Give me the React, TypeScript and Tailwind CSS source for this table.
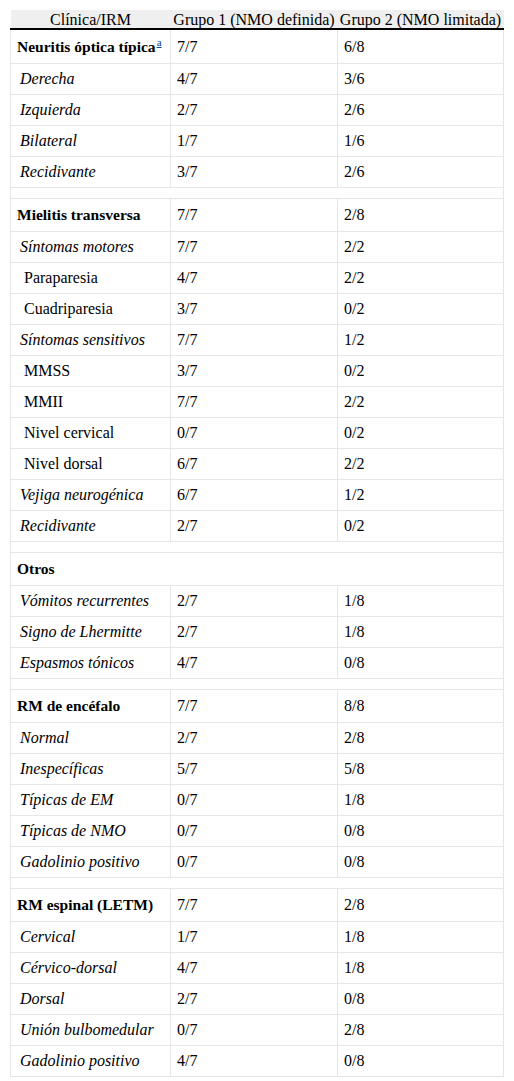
type Row =
  | { kind: 'main'; label: string; g1: string; g2: string; note?: boolean }
  | { kind: 'sub'; label: string; g1: string; g2: string }
  | { kind: 'subsub'; label: string; g1: string; g2: string }
  | { kind: 'span'; label: string }
  | { kind: 'gap' }

const rows: Row[] = [
  { kind: 'main', label: 'Neuritis óptica típica', g1: '7/7', g2: '6/8', note: true },
  { kind: 'sub', label: 'Derecha', g1: '4/7', g2: '3/6' },
  { kind: 'sub', label: 'Izquierda', g1: '2/7', g2: '2/6' },
  { kind: 'sub', label: 'Bilateral', g1: '1/7', g2: '1/6' },
  { kind: 'sub', label: 'Recidivante', g1: '3/7', g2: '2/6' },
  { kind: 'gap' },
  { kind: 'main', label: 'Mielitis transversa', g1: '7/7', g2: '2/8' },
  { kind: 'sub', label: 'Síntomas motores', g1: '7/7', g2: '2/2' },
  { kind: 'subsub', label: 'Paraparesia', g1: '4/7', g2: '2/2' },
  { kind: 'subsub', label: 'Cuadriparesia', g1: '3/7', g2: '0/2' },
  { kind: 'sub', label: 'Síntomas sensitivos', g1: '7/7', g2: '1/2' },
  { kind: 'subsub', label: 'MMSS', g1: '3/7', g2: '0/2' },
  { kind: 'subsub', label: 'MMII', g1: '7/7', g2: '2/2' },
  { kind: 'subsub', label: 'Nivel cervical', g1: '0/7', g2: '0/2' },
  { kind: 'subsub', label: 'Nivel dorsal', g1: '6/7', g2: '2/2' },
  { kind: 'sub', label: 'Vejiga neurogénica', g1: '6/7', g2: '1/2' },
  { kind: 'sub', label: 'Recidivante', g1: '2/7', g2: '0/2' },
  { kind: 'gap' },
  { kind: 'span', label: 'Otros' },
  { kind: 'sub', label: 'Vómitos recurrentes', g1: '2/7', g2: '1/8' },
  { kind: 'sub', label: 'Signo de Lhermitte', g1: '2/7', g2: '1/8' },
  { kind: 'sub', label: 'Espasmos tónicos', g1: '4/7', g2: '0/8' },
  { kind: 'gap' },
  { kind: 'main', label: 'RM de encéfalo', g1: '7/7', g2: '8/8' },
  { kind: 'sub', label: 'Normal', g1: '2/7', g2: '2/8' },
  { kind: 'sub', label: 'Inespecíficas', g1: '5/7', g2: '5/8' },
  { kind: 'sub', label: 'Típicas de EM', g1: '0/7', g2: '1/8' },
  { kind: 'sub', label: 'Típicas de NMO', g1: '0/7', g2: '0/8' },
  { kind: 'sub', label: 'Gadolinio positivo', g1: '0/7', g2: '0/8' },
  { kind: 'gap' },
  { kind: 'main', label: 'RM espinal (LETM)', g1: '7/7', g2: '2/8' },
  { kind: 'sub', label: 'Cervical', g1: '1/7', g2: '1/8' },
  { kind: 'sub', label: 'Cérvico-dorsal', g1: '4/7', g2: '1/8' },
  { kind: 'sub', label: 'Dorsal', g1: '2/7', g2: '0/8' },
  { kind: 'sub', label: 'Unión bulbomedular', g1: '0/7', g2: '2/8' },
  { kind: 'sub', label: 'Gadolinio positivo', g1: '4/7', g2: '0/8' },
]

const cell = 'border border-[#e6e6e6] px-[6px] py-0 align-middle'

function TableRow({ row }: { row: Row }) {
  if (row.kind === 'gap') {
    return (
      <tr className="h-[11px]">
        <td colSpan={3} className="border border-[#e6e6e6] p-0" />
      </tr>
    )
  }

  if (row.kind === 'span') {
    return (
      <tr className="h-[33px]">
        <td colSpan={3} className={`${cell} text-[15.5px] font-bold`}>
          {row.label}
        </td>
      </tr>
    )
  }

  let labelClass = ''
  let height = 'h-[31px]'
  if (row.kind === 'main') {
    labelClass = 'text-[15.5px] font-bold'
    height = row.note ? 'h-[34px]' : 'h-[33px]'
  } else if (row.kind === 'sub') {
    labelClass = 'italic pl-[9px]'
  } else {
    labelClass = 'pl-[13px]'
  }

  return (
    <tr className={height}>
      <td className={`${cell} ${labelClass} whitespace-nowrap`}>
        {row.label}
        {row.kind === 'main' && row.note && (
          <sup className="ml-px text-[11px] font-normal text-[#0645ad] underline">a</sup>
        )}
      </td>
      <td className={cell}>{row.g1}</td>
      <td className={cell}>{row.g2}</td>
    </tr>
  )
}

export default function App() {
  return (
    <div className="min-h-screen bg-white pt-[10px] pl-[10px] font-['Liberation_Serif','Times_New_Roman',serif] text-[16px] leading-[17px] text-black">
      <table className="w-[493px] table-fixed border-collapse">
        <colgroup>
          <col className="w-[160px]" />
          <col className="w-[167px]" />
          <col className="w-[166px]" />
        </colgroup>
        <thead>
          <tr className="h-[19px] bg-[#efefef]">
            <th className="border-b-2 border-black px-0 py-0 text-center font-normal whitespace-nowrap">Clínica/IRM</th>
            <th className="border-b-2 border-black px-0 py-0 text-center font-normal whitespace-nowrap">Grupo 1 (NMO definida)</th>
            <th className="border-b-2 border-black px-0 py-0 text-center font-normal whitespace-nowrap">Grupo 2 (NMO limitada)</th>
          </tr>
        </thead>
        <tbody>
          {rows.map((row, index) => (
            <TableRow key={index} row={row} />
          ))}
        </tbody>
      </table>
    </div>
  )
}
